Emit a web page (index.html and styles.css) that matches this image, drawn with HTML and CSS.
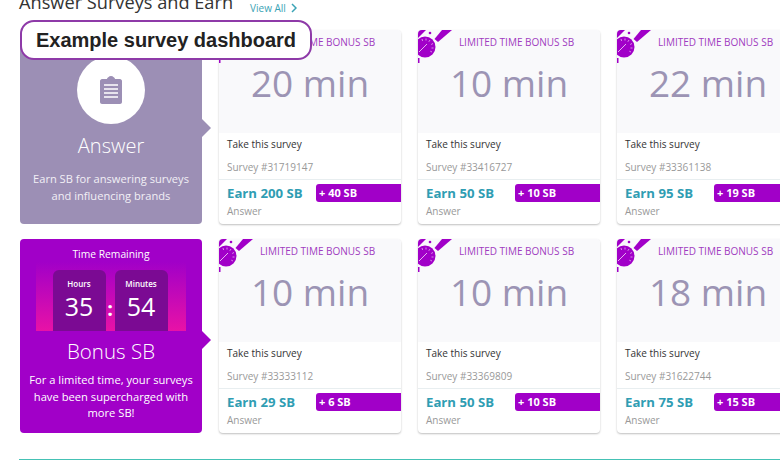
FILE: index.html
```html
<!DOCTYPE html>
<html lang="en">
<head>
<meta charset="utf-8">
<title>Example survey dashboard</title>
<link rel="stylesheet" href="styles.css">
</head>
<body>
<div class="page">
  <header class="head">
    <h1>Answer Surveys and Earn</h1>
    <a class="viewall">View All <svg class="chev" viewBox="0 0 6 10" width="6" height="10"><path d="M1 1l4 4-4 4" fill="none" stroke="#3aa3b5" stroke-width="1.5"/></svg></a>
  </header>
  <div class="callout">Example survey dashboard</div>
  <main class="grid">
    <section class="panel answer">
      <div class="disc">
        <svg viewBox="0 0 22 28" width="22" height="28"><path fill="#9c8fb5" d="M2 3h5c0-1 2-3 4-3s4 2 4 3h5c1 0 2 1 2 2v21c0 1-1 2-2 2H2c-1 0-2-1-2-2V5c0-1 1-2 2-2z"/><path fill="none" stroke="#fff" stroke-width="1.5" d="M4 9h14M4 13h14M4 17h14M4 21h14"/></svg>
      </div>
      <h2>Answer</h2>
      <p>Earn SB for answering surveys and influencing brands</p>
    </section>

    <article class="card">
      <div class="top"><svg class="watch" viewBox="0 0 36 36" width="36" height="36"><use href="#sw"/></svg><div class="lim">LIMITED TIME BONUS SB</div><div class="dur">20 min</div></div>
      <div class="take">Take this survey</div><div class="num">Survey #31719147</div>
      <div class="foot"><div class="row"><b class="earn">Earn 200 SB</b><b class="plus">+ 40 SB</b></div><div class="kind">Answer</div></div>
    </article>
    <article class="card">
      <div class="top"><svg class="watch" viewBox="0 0 36 36" width="36" height="36"><use href="#sw"/></svg><div class="lim">LIMITED TIME BONUS SB</div><div class="dur">10 min</div></div>
      <div class="take">Take this survey</div><div class="num">Survey #33416727</div>
      <div class="foot"><div class="row"><b class="earn">Earn 50 SB</b><b class="plus">+ 10 SB</b></div><div class="kind">Answer</div></div>
    </article>
    <article class="card">
      <div class="top"><svg class="watch" viewBox="0 0 36 36" width="36" height="36"><use href="#sw"/></svg><div class="lim">LIMITED TIME BONUS SB</div><div class="dur">22 min</div></div>
      <div class="take">Take this survey</div><div class="num">Survey #33361138</div>
      <div class="foot"><div class="row"><b class="earn">Earn 95 SB</b><b class="plus">+ 19 SB</b></div><div class="kind">Answer</div></div>
    </article>

    <section class="panel bonus">
      <div class="tr">Time Remaining</div>
      <div class="timer">
        <div class="cell"><span class="lab">Hours</span><span class="val">35</span></div>
        <span class="colon">:</span>
        <div class="cell"><span class="lab">Minutes</span><span class="val">54</span></div>
      </div>
      <h2>Bonus SB</h2>
      <p>For a limited time, your surveys have been supercharged with more SB!</p>
    </section>

    <article class="card">
      <div class="top"><svg class="watch" viewBox="0 0 36 36" width="36" height="36"><use href="#sw"/></svg><div class="lim">LIMITED TIME BONUS SB</div><div class="dur">10 min</div></div>
      <div class="take">Take this survey</div><div class="num">Survey #33333112</div>
      <div class="foot"><div class="row"><b class="earn">Earn 29 SB</b><b class="plus">+ 6 SB</b></div><div class="kind">Answer</div></div>
    </article>
    <article class="card">
      <div class="top"><svg class="watch" viewBox="0 0 36 36" width="36" height="36"><use href="#sw"/></svg><div class="lim">LIMITED TIME BONUS SB</div><div class="dur">10 min</div></div>
      <div class="take">Take this survey</div><div class="num">Survey #33369809</div>
      <div class="foot"><div class="row"><b class="earn">Earn 50 SB</b><b class="plus">+ 10 SB</b></div><div class="kind">Answer</div></div>
    </article>
    <article class="card">
      <div class="top"><svg class="watch" viewBox="0 0 36 36" width="36" height="36"><use href="#sw"/></svg><div class="lim">LIMITED TIME BONUS SB</div><div class="dur">18 min</div></div>
      <div class="take">Take this survey</div><div class="num">Survey #31622744</div>
      <div class="foot"><div class="row"><b class="earn">Earn 75 SB</b><b class="plus">+ 15 SB</b></div><div class="kind">Answer</div></div>
    </article>
  </main>
  <div class="rule"></div>
</div>
<svg class="defs" width="0" height="0">
  <defs>
    <g id="sw">
      <path fill="#a100c8" d="M0 0h8L0 8z"/>
      <circle cx="12" cy="3" r="1.300" fill="#a100c8"/>
      <path fill="#a100c8" d="M24 0h10L20 12l-3.500-3z"/>
      <circle cx="7" cy="17" r="10.500" fill="#a100c8"/>
      <path fill="none" stroke="#e6b3f0" stroke-width=".8" d="M4 9l.6 2M8 8.500v2M12 10l-1.200 1.800M15 13.500l-1.800 1M15.500 18h-2M14 22l-1.700-.8"/>
      <path fill="none" stroke="#e6b3f0" stroke-width="1" d="M1 22l8-8"/>
      <rect x="0" y="28" width="1.500" height="5" fill="#a100c8"/>
    </g>
  </defs>
</svg>
</body>
</html>
```
FILE: styles.css
```css
* { box-sizing: border-box; }
html, body { margin: 0; padding: 0; }
body {
  width: 780px;
  height: 462px;
  overflow: hidden;
  background: #fff;
  font-family: "Open Sans", sans-serif;
  color: #333;
}
.page { position: relative; width: 820px; margin-top: -10px; padding-left: 19px; }
.head {
  height: 24px;
  display: flex;
  align-items: flex-end;
  gap: 17px;
  margin-bottom: 16px;
}
.head h1 { margin: 0 0 -1px; font-size: 18.2px; font-weight: 400; line-height: 25px; color: #333; }
.viewall { font-size: 10px; color: #3aa3b5; display: flex; align-items: center; gap: 5px; line-height: 14px; margin-bottom: -1px; }
.chev { display: block; }
.callout {
  position: absolute;
  left: 20px;
  top: 30px;
  width: 292px;
  height: 40px;
  border: 2px solid #8e3aa8;
  border-radius: 14px;
  background: #fff;
  font: 700 20px/37px "Liberation Sans", Arial, sans-serif;
  color: #222;
  text-align: center;
  z-index: 3;
  white-space: nowrap;
}
.grid {
  display: grid;
  grid-template-columns: repeat(4, 182px);
  grid-auto-rows: 194px;
  column-gap: 17px;
  row-gap: 15px;
  padding-left: 1px;
}
.panel {
  position: relative;
  border-radius: 4px;
  color: #fff;
  text-align: center;
  display: flex;
  flex-direction: column;
  align-items: center;
}
.panel::after {
  content: "";
  position: absolute;
  right: -9px;
  width: 0;
  height: 0;
  border-style: solid;
  border-width: 9px 0 9px 9px;
  border-color: transparent transparent transparent currentColor;
}
.answer { background: #9c8fb5; padding-top: 26px; }
.answer::after { top: 89px; color: #9c8fb5; }
.bonus { background: #a100c8; padding-top: 7px; }
.bonus::after { top: 92px; color: #a100c8; }
.disc {
  width: 68px;
  height: 68px;
  border-radius: 50%;
  background: #fff;
  display: flex;
  align-items: center;
  justify-content: center;
  flex: none;
}
.panel h2 { margin: 0; font-weight: 300; }
.answer h2 { font-size: 20px; line-height: 28px; margin-top: 8px; }
.panel p { margin: 0; font-size: 11.1px; line-height: 17px; }
.answer p { margin-top: 10px; padding: 0 4px; color: #f2eff6; }
.tr { font-size: 10.3px; line-height: 16px; }
.timer {
  width: 150px;
  height: 69px;
  padding: 8px 2px 0 0;
  background: linear-gradient(#a100c8, #e812a6);
  display: flex;
  justify-content: center;
}
.cell {
  width: 53px;
  background: #7b0a93;
  border-radius: 6px 6px 0 0;
  display: flex;
  flex-direction: column;
  align-items: center;
}
.lab { font-size: 8px; font-weight: 600; line-height: 12px; margin-top: 8px; }
.val { font-size: 25px; line-height: 32px; font-weight: 400; }
.colon { width: 9px; text-align: center; font-size: 20px; font-weight: 700; line-height: 30px; padding-top: 24px; }
.bonus h2 { font-size: 20.5px; line-height: 28px; margin-top: 6px; }
.bonus p { margin-top: 7px; padding: 0 4px; line-height: 16.5px; font-size: 11.2px; }
.card {
  position: relative;
  background: #fff;
  border-radius: 4px;
  box-shadow: 0 1px 2px rgba(0,0,0,.25);
  overflow: hidden;
  font-size: 10px;
}
.top { height: 103px; background: #f9f9fb; text-align: center; }
.watch { position: absolute; left: 0; top: 0; display: block; }
.lim { font-size: 10px; line-height: 14px; color: #a03cc0; padding: 5px 0 0 15px; }
.dur { font-size: 37px; line-height: 50px; color: #9c94b4; margin-top: 9px; }
.take { font-size: 10px; line-height: 14px; color: #333; padding: 4px 8px 0; }
.num { font-size: 10px; line-height: 14px; color: #999; padding: 9px 8px 0; }
.foot { margin-top: 5px; border-top: 1px solid #e8eef0; padding: 4px 0 0 8px; }
.row { display: flex; align-items: center; justify-content: space-between; height: 18px; }
.earn { font-size: 13.2px; font-weight: 700; color: #2f9db3; white-space: nowrap; }
.plus { width: 85px; height: 18px; background: #a100c8; color: #fff; font-size: 11px; font-weight: 700; line-height: 18px; padding-left: 3px; border-radius: 3px 0 0 3px; }
.kind { font-size: 10px; line-height: 14px; color: #999; margin-top: 2px; }
.rule { position: absolute; left: 19px; top: 469px; width: 800px; height: 1px; background: #45c2b5; }
.defs { position: absolute; }
```
